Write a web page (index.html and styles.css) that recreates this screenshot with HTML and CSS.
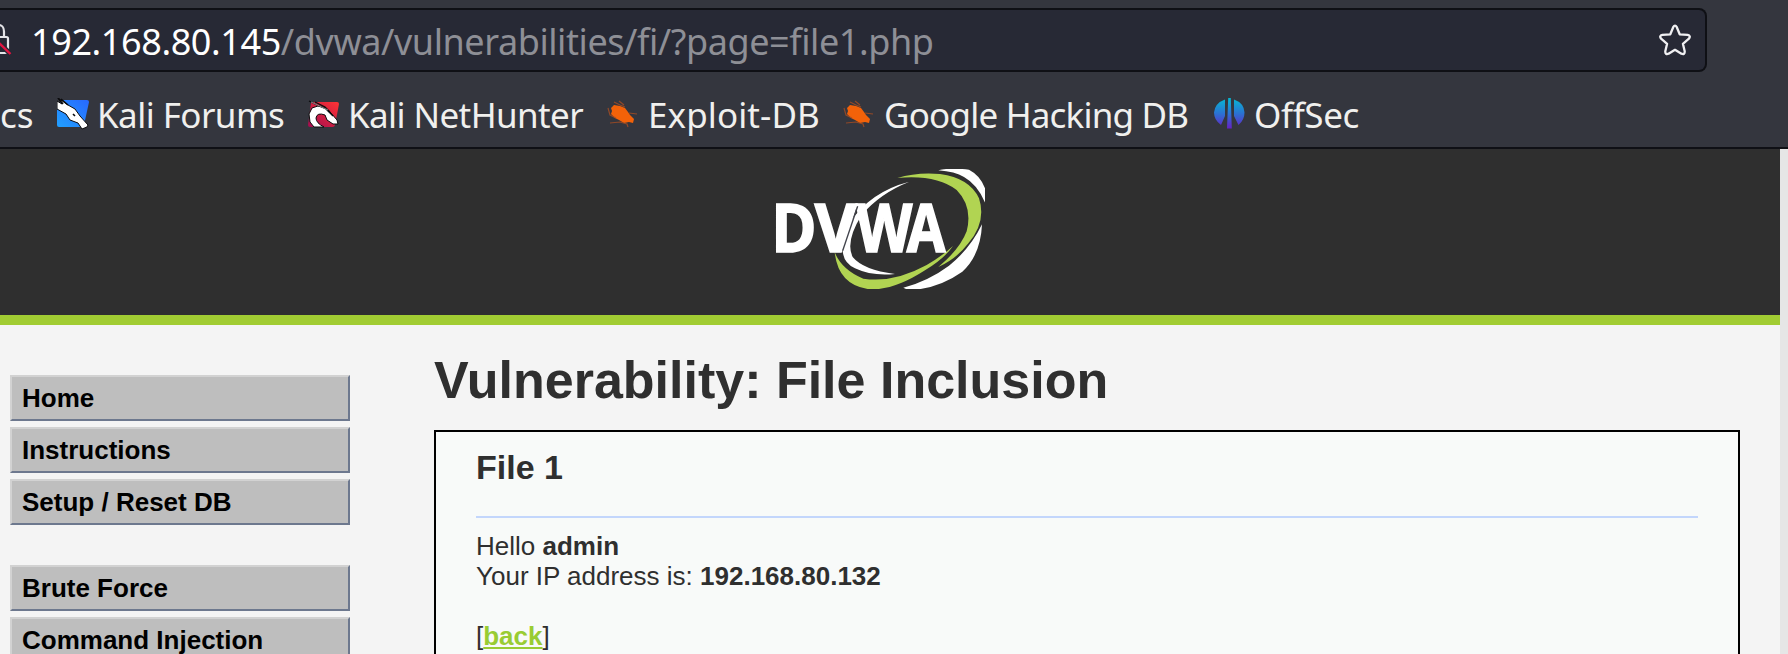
FILE: index.html
```html
<!DOCTYPE html>
<html lang="en">
<head>
<meta charset="utf-8">
<title>Vulnerability: File Inclusion</title>
<link rel="stylesheet" href="styles.css">
</head>
<body>
<div class="browser">
  <div class="address-bar">
    <svg class="lock" viewBox="0 0 12 34" width="12" height="34"><path d="M-6 15V9.500C-6 1 4 1 4 9.500V15M-8 15H6.500q1.500 0 1.500 1.500V28q0 3-3 3H-8" fill="none" stroke="#e4e4e8" stroke-width="2.200"/><path d="M-4 18L10.500 32" stroke="#272935" stroke-width="5"/><path d="M-4 18L10.500 32" stroke="#e21441" stroke-width="2.400"/></svg>
    <span class="url"><span class="host">192.168.80.145</span><span class="path">/dvwa/vulnerabilities/fi/?page=file1.php</span></span>
    <svg class="star" viewBox="0 0 32 32" width="32" height="32"><path d="M14.200 3.200Q16 .2 17.800 3.200L20.700 10.300L28.600 10.900Q32.200 11.800 29.900 14.700L23.900 19.800L25.700 27.300Q25.900 31 22.400 29.700L16 25.800L9.600 29.700Q6.100 31 6.300 27.300L8.100 19.800L2.100 14.700Q-.2 11.800 3.400 10.900L11.300 10.300Z" fill="none" stroke="#f0f0f2" stroke-width="2.300" stroke-linejoin="round"/></svg>
  </div>
  <div class="bookmarks">
    <div class="bookmark docs"><span>cs</span></div>
    <div class="bookmark forums">
      <svg viewBox="0 0 32 32" width="32" height="32"><defs><linearGradient id="blue" x1="0" y1="1" x2="1" y2="0"><stop stop-color="#21a0ff"/><stop offset="1" stop-color="#2868ff"/></linearGradient></defs><path d="M5 2H30q2 0 2 2L27 27q-.5 2-2.500 2H2q-2 0-2-2V8Z" fill="url(#blue)"/><path d="M1 0L11 7L18 11L23 18L31 27L30 29L25 31L21 25L13 22L9 16L0 11V3L5 6Z" fill="#fff" stroke="#0b0b0d" stroke-width="1"/><path d="M1 0L6 6M4 1L11 7M16 16l2 2" fill="none" stroke="#0b0b0d" stroke-width="1.600"/></svg>
      <span>Kali Forums</span>
    </div>
    <div class="bookmark nethunter">
      <svg viewBox="0 0 32 32" width="32" height="32"><defs><linearGradient id="red" x1="0" y1="1" x2="1" y2="0"><stop stop-color="#a30b50"/><stop offset="1" stop-color="#ff3434"/></linearGradient></defs><path d="M5 4H29q2 0 2 2L27 27q-.5 2-2.500 2H2q-2 0-2-2L3 5Z" fill="url(#red)"/><path d="M6 29L2 24L1 16L4 10L10 8L18 10L23 15L29 22L30 26L25 26L19 22L17 17Q9 14 8 20Q8 25 16 29Z" fill="#fff" stroke="#0b0b0d" stroke-width="1"/><path d="M1 3L9 7L18 11L25 18M7 4L17 9L22 14" fill="none" stroke="#0b0b0d" stroke-width="1.300"/><path d="M3 4L20 12" stroke="#aaa" stroke-width=".8"/></svg>
      <span>Kali NetHunter</span>
    </div>
    <div class="bookmark exploit">
      <svg viewBox="0 0 32 32" width="32" height="32"><g id="bug" transform="translate(-1 1)"><path d="M5 9L8 6L14 7L19 9L22 13L24 16L28 20L27 24L23 23L18 24L13 21L9 19L5 15L6 12Z" fill="#f36209"/><path d="M8 3L14 6L19 8M2 9L4 16L10 19M23 14L31 15M4 24L14 23L21 25L22 28M13 2l5 4" fill="none" stroke="#a94d22" stroke-width="1.200" opacity=".8"/></g></svg>
      <span>Exploit-DB</span>
    </div>
    <div class="bookmark hacking">
      <svg viewBox="0 0 32 32" width="32" height="32"><use href="#bug"/></svg>
      <span>Google Hacking DB</span>
    </div>
    <div class="bookmark offsec">
      <svg viewBox="0 0 32 32" width="32" height="32"><defs><linearGradient id="off" gradientUnits="userSpaceOnUse" x1="0" y1="0" x2="0" y2="31"><stop stop-color="#05b9d2"/><stop offset=".5" stop-color="#2b72d2"/><stop offset="1" stop-color="#681fc4"/></linearGradient></defs><path d="M11 1.500V18L7 27Q0 22 0 14.500Q1 5 11 1.500ZM20 1.500V18L24.500 27Q30.500 22 30.500 14.500Q30 5 20 1.500ZM14.200 0H16.800L17.800 30.500H13Z" fill="url(#off)"/></svg>
      <span>OffSec</span>
    </div>
  </div>
</div>
<div class="viewport">
  <div class="page">
    <header class="header">
      <svg class="logo" viewBox="15 42 660 360" width="220" height="120">
        <path d="M448 80Q330 110 268 205Q220 310 285 340Q335 364 405 357Q310 345 278 306Q255 260 305 180Q360 115 448 80Z" fill="#fff"/>
        <path d="M535 46Q570 37 627 44Q666 64 678 110V150Q655 90 612 66Q585 50 535 46ZM666 208Q630 282 567 332Q505 378 430 398L446 406Q535 401 607 350Q662 300 666 208Z" fill="#fff"/>
        <path d="M412 69Q470 51 540 57Q629 69 657 130Q680 200 625 265Q590 311 535 336Q600 282 620 229Q639 155 590 105Q528 58 412 69ZM224 292Q246 345 310 371Q400 385 500 330Q548 302 579 273Q554 310 495 346Q402 406 330 403Q235 392 224 292Z" fill="#b1d452"/>
        <g class="logo-text"><text x="34" y="290" textLength="136" lengthAdjust="spacingAndGlyphs">D</text><text x="164" y="290" textLength="126" lengthAdjust="spacingAndGlyphs">V</text><text x="289" y="290" textLength="168" lengthAdjust="spacingAndGlyphs">W</text><text x="440" y="290" textLength="116" lengthAdjust="spacingAndGlyphs">A</text></g>
        <path d="M293 154L248 287" stroke="#41434b" stroke-width="4"/>
      </svg>
    </header>
    <div class="columns">
      <nav class="menu">
        <ul class="menu-group"><li>Home</li><li>Instructions</li><li>Setup / Reset DB</li></ul>
        <ul class="menu-group"><li>Brute Force</li><li>Command Injection</li></ul>
      </nav>
      <main class="content">
        <h1>Vulnerability: File Inclusion</h1>
        <section class="panel">
          <h3>File 1</h3>
          <hr>
          <p>Hello <b>admin</b><br>Your IP address is: <b>192.168.80.132</b><br><br>[<a>back</a>]</p>
        </section>
      </main>
    </div>
  </div>
  <div class="scrollbar"></div>
</div>
</body>
</html>
```
FILE: styles.css
```css
* { box-sizing: border-box; }
body { margin: 0; height: 654px; overflow: hidden; font-family: "Liberation Sans", Arial, sans-serif; }
svg { display: block; flex: none; }
.browser { height: 149px; padding-top: 8px; background: #34363e; border-bottom: 2px solid #0f1015; font-family: "Noto Sans", sans-serif; }
.address-bar { width: 1707px; height: 64px; border: 2px solid #0f1015; border-left: 0; border-radius: 0 8px 8px 0; background: #272935; display: flex; align-items: center; padding-right: 14px; }
.lock { margin-top: -3px; }
.url { flex: 1; margin-left: 19px; padding-top: 3px; font-size: 36px; line-height: 60px; white-space: nowrap; }
.host { color: #fff; letter-spacing: -0.4px; }
.path { color: #8e8f96; letter-spacing: -0.43px; }
.bookmarks { display: flex; height: 75px; padding-top: 10px; color: #f0f0ee; font-size: 35px; line-height: 66px; white-space: nowrap; }
.bookmark { display: flex; flex: none; }
.bookmark svg { margin: 16px 8px 0 0; }
.docs { width: 57px; }
.forums { width: 251px; letter-spacing: -0.55px; }
.nethunter { width: 299px; letter-spacing: -0.6px; }
.exploit { width: 236px; letter-spacing: 0.1px; }
.exploit svg, .hacking svg { margin-right: 9px; }
.hacking { width: 371px; letter-spacing: -0.8px; }
.offsec { width: 160px; letter-spacing: -0.35px; }
.viewport { display: flex; height: 505px; }
.page { width: 1780px; background: #f4f4f4; }
.scrollbar { width: 8px; background: #e6e6e6; }
.header { height: 176px; padding: 20px 0 0 765px; background: #2f2f2f; border-bottom: 10px solid #a1cc33; }
.logo-text { font-family: "Open Sans", sans-serif; font-weight: 700; font-size: 198px; fill: #fff; stroke: #fff; stroke-width: 5px; }
.columns { display: flex; height: 329px; overflow: hidden; }
.menu { width: 350px; padding: 50px 0 0 10px; }
.menu-group { list-style: none; margin: 0 0 40px; padding: 0; display: grid; gap: 6px; }
.menu-group li { height: 46px; padding-left: 10px; border: 2px solid; border-color: #d2d2d2 #6d788e #6d788e #d2d2d2; background: #bebebe; color: #000; font-size: 26px; font-weight: 700; line-height: 42px; white-space: nowrap; }
.content { width: 1306px; margin-left: 84px; color: #2f2f2f; }
h1 { margin: 0; padding-top: 25px; height: 105px; font-size: 52px; line-height: 60px; }
.panel { height: 300px; padding: 16px 40px; border: 2px solid #000; background: #f8faf9; font-size: 26px; line-height: 30px; }
h3 { margin: 0; height: 68px; font-size: 34px; line-height: 38px; }
hr { margin: 0; height: 2px; border: 0; background: #c3d6fc; }
p { margin: 13px 0 0; }
a { color: #99cc33; font-weight: 700; text-decoration: underline; }
```
